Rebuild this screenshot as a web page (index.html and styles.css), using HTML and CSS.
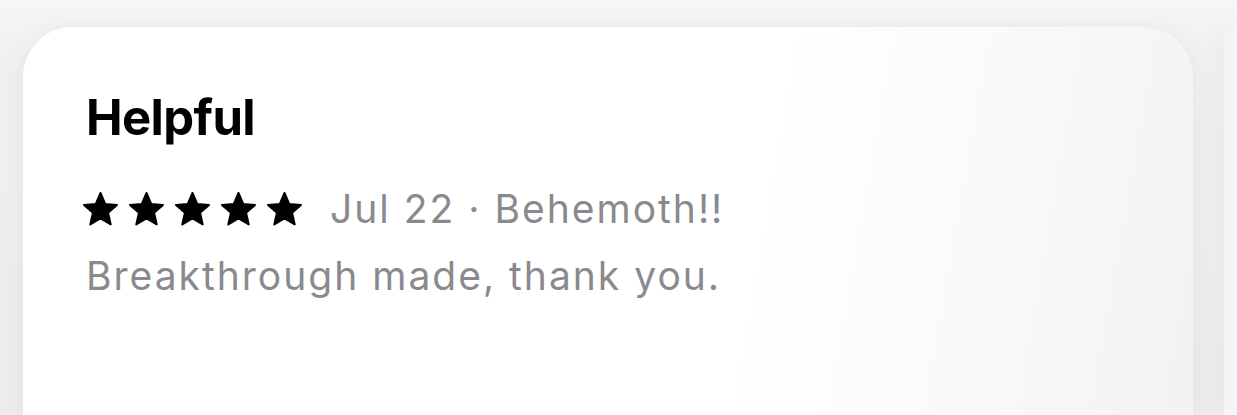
FILE: index.html
```html
<!DOCTYPE html>
<html lang="en">
<head>
<meta charset="utf-8">
<title>Review</title>
<link rel="stylesheet" href="styles.css">
</head>
<body>
<div class="strip">
  <article class="card">
    <h2 class="title">Helpful</h2>
    <div class="meta">
      <div class="stars" aria-label="5 stars">
        <svg class="star" viewBox="0 0 35 34"><polygon points="17.5,1 22.19,11.89 34,12.99 25.09,20.82 27.7,32.39 17.5,26.33 7.3,32.39 9.91,20.82 1,12.99 12.81,11.89"/></svg>
        <svg class="star" viewBox="0 0 35 34"><polygon points="17.5,1 22.19,11.89 34,12.99 25.09,20.82 27.7,32.39 17.5,26.33 7.3,32.39 9.91,20.82 1,12.99 12.81,11.89"/></svg>
        <svg class="star" viewBox="0 0 35 34"><polygon points="17.5,1 22.19,11.89 34,12.99 25.09,20.82 27.7,32.39 17.5,26.33 7.3,32.39 9.91,20.82 1,12.99 12.81,11.89"/></svg>
        <svg class="star" viewBox="0 0 35 34"><polygon points="17.5,1 22.19,11.89 34,12.99 25.09,20.82 27.7,32.39 17.5,26.33 7.3,32.39 9.91,20.82 1,12.99 12.81,11.89"/></svg>
        <svg class="star" viewBox="0 0 35 34"><polygon points="17.5,1 22.19,11.89 34,12.99 25.09,20.82 27.7,32.39 17.5,26.33 7.3,32.39 9.91,20.82 1,12.99 12.81,11.89"/></svg>
      </div>
      <span class="date">Jul 22 · Behemoth!!</span>
    </div>
    <p class="body">Breakthrough made, thank you.</p>
  </article>
  <article class="card next"></article>
</div>
</body>
</html>
```

FILE: styles.css
```css
html, body {
  margin: 0;
  padding: 0;
}
body {
  width: 1237px;
  height: 415px;
  overflow: hidden;
  background: linear-gradient(to bottom, #f6f6f6 0, #f0f0f0 60px, #ececec 100%);
  font-family: "Inter", "Liberation Sans", sans-serif;
}
.strip {
  display: flex;
  gap: 31px;
  height: 415px;
  box-sizing: border-box;
  padding: 27px 0 0 23px;
}
.card {
  flex: 0 0 1170px;
  height: 388px;
  box-sizing: border-box;
  padding: 61px 63px 0;
  border-radius: 50px 50px 0 0;
  background: linear-gradient(100deg, #ffffff 0%, #ffffff 62%, #f8f8f8 85%, #f2f2f2 100%);
  box-shadow: 0 0 24px rgba(0, 0, 0, 0.05);
}
.card.next {
  flex: 0 0 13px;
  padding: 0;
  border-radius: 40px 0 0 0;
  background: #f5f5f5;
}
.title {
  margin: 0;
  font-size: 49px;
  line-height: 60px;
  font-weight: 700;
  color: #000;
  letter-spacing: -0.6px;
}
.meta {
  display: flex;
  align-items: center;
  gap: 28px;
  margin-top: 37px;
  height: 48px;
}
.stars {
  display: flex;
  gap: 11px;
  margin-left: -3px;
}
.star {
  width: 35px;
  height: 34px;
  display: block;
}
.star polygon {
  fill: #000;
  stroke: #000;
  stroke-width: 2;
  stroke-linejoin: round;
}
.date, .body {
  font-size: 39px;
  line-height: 48px;
  color: #8a8a8e;
  letter-spacing: 2px;
}
.body {
  margin: 19px 0 0;
}
```
